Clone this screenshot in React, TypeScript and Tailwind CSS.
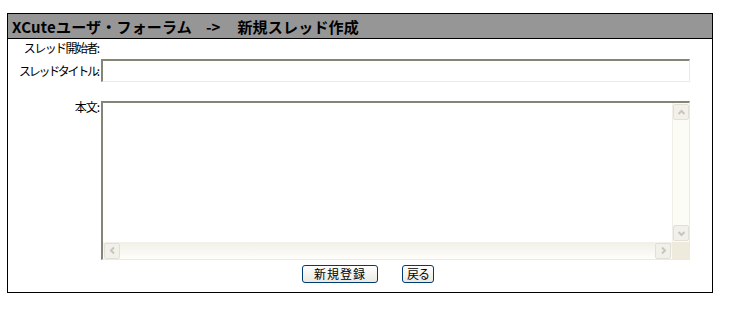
import React from "react";

const jp = { fontFamily: '"MS PGothic","Noto Sans CJK JP","Noto Sans",sans-serif' };

function Chevron({ dir }: { dir: "up" | "down" | "left" | "right" }) {
  const rot = { up: 0, right: 90, down: 180, left: 270 }[dir];
  return (
    <svg width="9" height="9" viewBox="0 0 9 9" style={{ transform: `rotate(${rot}deg)` }}>
      <path d="M1.5 6 L4.5 3 L7.5 6" fill="none" stroke="#c9c6b8" strokeWidth="2" />
    </svg>
  );
}

function SBtn({ dir }: { dir: "up" | "down" | "left" | "right" }) {
  return (
    <div className="w-[16px] h-[16px] rounded-[2px] border border-[#e2e0d6] bg-[#f1f0ea] flex items-center justify-center shrink-0">
      <Chevron dir={dir} />
    </div>
  );
}

export default function App() {
  return (
    <div className="bg-white w-[729px] h-[310px] pt-[13px] pl-[7px]" style={jp}>
      <div className="w-[706px] h-[280px] border border-black flex flex-col">
        <div className="h-[25px] bg-[#969696] border-b border-black flex items-center pl-[4px] text-[15px] font-bold text-black leading-none whitespace-nowrap">
          <span className="tracking-[0.2px]">XCuteユーザ・フォーラム</span>
          <span className="ml-[14px]">-&gt;</span>
          <span className="ml-[17px] tracking-[0.2px]">新規スレッド作成</span>
        </div>

        <div className="flex h-[18px] items-center">
          <div className="w-[93px] pr-[1px] text-right text-[12px] leading-[14px] whitespace-nowrap">
            <span className="tracking-[-1.6px]">スレッド開始者</span>:
          </div>
        </div>

        <div className="flex mt-[2px] items-center">
          <div className="w-[93px] pr-[1px] text-right text-[12px] leading-[14px] whitespace-nowrap">
            <span className="tracking-[-2.3px]">スレッドタイトル</span>:
          </div>
          <div className="w-[589px] h-[23px] border-t-2 border-l-2 border-r border-b border-t-[#858577] border-l-[#858577] border-r-[#eceadf] border-b-[#eceadf] bg-white" />
        </div>

        <div className="flex mt-[19px] items-start">
          <div className="w-[93px] pr-[1px] text-right text-[12px] leading-[12px] whitespace-nowrap">
            <span className="tracking-[-1px]">本文</span>:
          </div>
          <div className="w-[589px] h-[159px] border-t-2 border-l-2 border-r border-b border-t-[#858577] border-l-[#858577] border-r-[#eceadf] border-b-[#eceadf] bg-white flex flex-col">
            <div className="flex flex-1 min-h-0">
              <div className="flex-1" />
              <div className="w-[17px] bg-[#fcfcf7] border-l border-[#f1efe6] flex flex-col justify-between items-center py-[1px]">
                <SBtn dir="up" />
                <SBtn dir="down" />
              </div>
            </div>
            <div className="flex h-[17px]">
              <div className="flex-1 bg-gradient-to-b from-[#f1efe6] to-[#fefefb] flex justify-between items-center px-[1px]">
                <SBtn dir="left" />
                <SBtn dir="right" />
              </div>
              <div className="w-[17px] bg-[#eeebdd]" />
            </div>
          </div>
        </div>

        <div className="flex mt-[5px] pl-[294px] gap-[24px]">
          <button className="w-[76px] h-[18px] rounded-[3px] border border-[#003c74] bg-gradient-to-b from-white to-[#ebe9e0] text-[12px] leading-none tracking-[1px] text-black flex items-center justify-center" style={jp}>
            新規登録
          </button>
          <button className="w-[32px] h-[18px] rounded-[3px] border border-[#003c74] bg-gradient-to-b from-white to-[#ebe9e0] text-[12px] leading-none text-black flex items-center justify-center tracking-[-1px]" style={jp}>
            戻る
          </button>
        </div>
      </div>
    </div>
  );
}
